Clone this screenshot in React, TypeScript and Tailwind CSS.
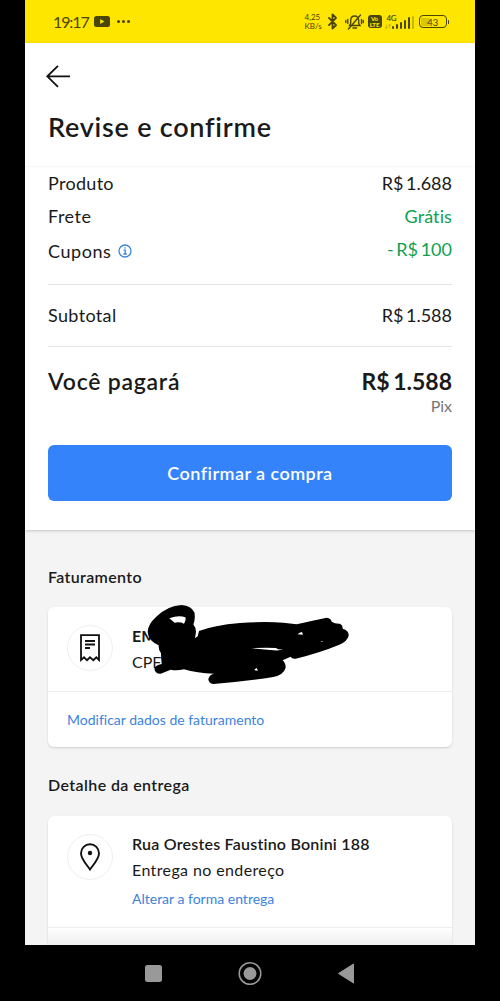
import React from 'react';
import { Bluetooth } from 'lucide-react';

const summary = [
  { label: 'Produto', value: 'R$ 1.688', color: 'text-[#1a1a1a]', labelSpacing: 'tracking-[0.3px]', valueSpacing: '[word-spacing:-2px]' },
  { label: 'Frete', value: 'Grátis', color: 'text-[#0fa150]', labelSpacing: 'tracking-[0.5px]', valueSpacing: 'tracking-[0.1px]' },
];

const signalBars = [3, 5, 7, 9, 12];

const StatusBar = () => {
  return (
    <div className="flex h-[43px] shrink-0 items-center bg-[#ffe600] pl-7 pr-[26px] text-[#4a4508]">
      <span className="w-[34px] whitespace-nowrap text-[16px] leading-none tracking-[-1.1px]">19:17</span>
      <svg className="ml-[7px] h-[11px] w-4" viewBox="0 0 16 11">
        <rect width="16" height="11" rx="2.5" fill="#4a4508" />
        <path d="M6.2 3v5L10.4 5.500z" fill="#ffe600" />
      </svg>
      <div className="ml-[7px] flex gap-[2.5px]">
        <i className="h-[2.5px] w-[2.5px] rounded-full bg-[#4a4508]" />
        <i className="h-[2.5px] w-[2.5px] rounded-full bg-[#4a4508]" />
        <i className="h-[2.5px] w-[2.5px] rounded-full bg-[#4a4508]" />
      </div>

      <div className="ml-auto flex items-center">
        <div className="w-[19px] text-[8px] leading-[9px]">
          <div>4,25</div>
          <div className="whitespace-nowrap">KB/s</div>
        </div>
        <Bluetooth className="h-[19px] w-[17px]" strokeWidth={2.6} />
        <svg className="ml-[4px] h-[18px] w-[19px]" viewBox="0 0 19 18" fill="none" stroke="currentColor" strokeWidth="1.4" strokeLinecap="round">
          <path d="M4.500 12.500h10.500l-1.300-2V7.500C13.700 4.500 12 3 9.700 3S5.700 4.500 5.700 7.500v3zM8 15h3.500M3.500 16L15.500 2M2.800 6.500v4M.8 7.500v2M16.500 6.500v4M18.300 7.500v2" />
        </svg>
        <div className="ml-1 flex h-[13px] w-[14px] flex-col items-center justify-center rounded-[3px] bg-[#4a4508] text-[6px] font-black leading-[5.5px] text-[#ffe600]">
          <span>Vo</span>
          <span>LTE</span>
        </div>
        <div className="relative ml-[5px] flex h-[14px] w-[27px] items-end justify-end gap-[1.5px]">
          <span className="absolute -top-[1px] left-0 text-[8px] font-semibold leading-[8px] tracking-[-0.4px]">4G</span>
          <span className="absolute bottom-0 left-[-2px] text-[5px] leading-[6px] tracking-[-0.5px] opacity-60">↓↑</span>
          {signalBars.map((height) => (
            <i key={height} className="w-[2.5px] shrink-0 rounded-sm bg-[#4a4508]" style={{ height }} />
          ))}
          <i className="h-[13px] w-[2px] shrink-0 rounded-sm bg-[#4a4508]/30" />
        </div>
        <div className="ml-[5px] flex h-[13px] w-[28px] items-center rounded-[4px] border-[1.5px] border-[#4a4508] p-[1.5px] text-[10px] leading-none">
          <span className="h-full w-[9px] bg-[#4a4508]/20" />
          <span className="-ml-[3px] tracking-[-0.3px]">43</span>
        </div>
        <i className="ml-px h-1 w-[1.5px] rounded bg-[#4a4508]" />
      </div>
    </div>
  );
};

const InfoIcon = () => (
  <svg className="ml-[7px] h-[14px] w-[14px]" viewBox="0 0 14 14" fill="none" stroke="#3c83dc" strokeWidth="1.3">
    <circle cx="7" cy="7" r="6" />
    <path d="M5.600 6.200H7.200v3.600M5.400 10h3.400" />
    <circle cx="7" cy="4" r=".8" fill="#3c83dc" stroke="none" />
  </svg>
);

const Scribble = () => (
  <svg className="absolute left-[97px] top-[-6px] h-[86px] w-[205px]" viewBox="45 18 615 258">
    <path
      fillRule="evenodd"
      d="M53 110Q54 88 78 66Q112 32 155 30Q184 32 193 52Q197 70 190 88Q197 97 198 110L195 130L203 124L207 108Q250 91 330 84Q400 79 460 83L500 88Q550 76 590 68Q603 69 605 80Q615 87 630 86Q639 91 638 101Q657 107 656 122Q652 139 628 149Q570 173 497 191Q486 193 482 185L458 196Q467 204 467 218Q461 239 430 246Q350 259 250 267Q236 265 235 252Q238 239 252 236Q200 235 162 223Q140 228 122 224L92 236Q76 237 73 221Q76 210 95 207Q93 188 93 175Q85 165 86 151Q54 136 53 110ZM118 70L134 83Q150 80 162 86Q169 75 166 67Q146 60 118 70ZM362 160Q405 157 438 159Q444 165 462 163Q450 168 420 165ZM373 226Q376 220 380 219L384 227ZM503 118Q508 112 516 111L519 119ZM571 139L577 138L578 141Z"
      fill="#000"
    />
  </svg>
);

const App = () => {
  return (
    <div className="flex h-[1001px] w-[500px] flex-col bg-black font-['Lato','Liberation_Sans',sans-serif] text-[#1a1a1a] [font-variant-ligatures:none]">
      <div className="mx-[25px] flex h-[945px] flex-col overflow-hidden bg-[#f4f4f4]">
        <StatusBar />

        {/* Order summary */}
        <section className="h-[487px] shrink-0 bg-white shadow-[0_1px_3px_rgba(0,0,0,0.2)]">
          <header className="h-[124px] border-b border-[#f7f7f7] px-[21px] pt-[22px]">
            <svg className="h-6 w-6" viewBox="0 0 24 24" fill="none" stroke="#111" strokeWidth="1.8">
              <path d="M24 11.300H1M12 .8L1.300 11.300L12 21.800" />
            </svg>
            <h1 className="ml-[2px] mt-[22px] whitespace-nowrap text-[27px] font-semibold leading-8 tracking-[0.75px]">
              Revise e confirme
            </h1>
          </header>

          <div className="px-[23px] text-[18px]">
            {summary.map((row) => (
              <div key={row.label} className="flex h-[33px] items-center justify-between">
                <span className={row.labelSpacing}>{row.label}</span>
                <span className={`${row.color} ${row.valueSpacing}`}>{row.value}</span>
              </div>
            ))}
            <div className="flex h-[52px] justify-between border-b border-[#e4e4e4]">
              <span className="mt-1 flex h-7 items-center tracking-[0.55px]">
                Cupons
                <InfoIcon />
              </span>
              <span className="mt-[2px] h-7 leading-7 text-[#0fa150] [word-spacing:-2px]">- R$ 100</span>
            </div>
            <div className="flex h-[62px] items-center justify-between border-b border-[#e4e4e4]">
              <span className="tracking-[0.35px]">Subtotal</span>
              <span className="[word-spacing:-2px]">R$ 1.588</span>
            </div>
            <div className="flex h-[98px] justify-between pt-[18px]">
              <span className="text-[23px] font-semibold leading-8 tracking-[0.75px]">Você pagará</span>
              <div className="text-right">
                <div className="text-[23px] font-bold leading-8 [word-spacing:-2px]">R$ 1.588</div>
                <div className="text-[16px] leading-[18px] text-[#757575]">Pix</div>
              </div>
            </div>
            <button className="h-14 w-full rounded-md bg-[#3483fa] text-[18px] font-semibold tracking-[0.45px] text-white">
              Confirmar a compra
            </button>
          </div>
        </section>

        {/* Billing */}
        <section className="shrink-0 px-[23px] pt-[35px]">
          <h2 className="h-[42px] text-[16px] font-semibold leading-6 tracking-[0.35px]">Faturamento</h2>
          <div className="relative h-[140px] rounded-md bg-white shadow-[0_1px_2px_rgba(0,0,0,0.16)]">
            <div className="flex h-[85px] border-b border-[#eee] pl-[19px] pt-[18px]">
              <div className="flex h-[46px] w-[46px] items-center justify-center rounded-full border border-[#eee]">
                <svg className="h-7 w-5" viewBox="0 0 20 28" fill="none" stroke="#111" strokeWidth="1.8">
                  <path d="M1 1.200H19V26L16.300 23.300L13.300 26.200L10 23.300L7 26.200L4 23.300L1 26ZM5 7H15M5 10.500H15M5 14H10" />
                </svg>
              </div>
              <div className="ml-[19px] text-[16px] leading-[26px]">
                <div className="-mt-[2px] font-bold">EM</div>
                <div>CPF</div>
              </div>
            </div>
            <a className="block pl-[19px] text-[14px] leading-[55px] text-[#3c83dc]">Modificar dados de faturamento</a>
            <Scribble />
          </div>
        </section>

        {/* Delivery */}
        <section className="shrink-0 px-[23px] pt-[26px]">
          <h2 className="h-[43px] text-[16px] font-semibold leading-6 tracking-[0.4px]">Detalhe da entrega</h2>
          <div className="h-[160px] rounded-md bg-white shadow-[0_1px_2px_rgba(0,0,0,0.16)]">
            <div className="flex h-[112px] border-b border-[#eee] pl-[19px] pt-[17px]">
              <div className="mt-px flex h-[46px] w-[46px] items-center justify-center rounded-full border border-[#eee]">
                <svg className="h-7 w-5" viewBox="0 0 20 28" fill="none" stroke="#111" strokeWidth="1.9">
                  <path d="M10 26.500C7 22 1 16 1 10.200A9 9 0 0 1 19 10.200C19 16 13 22 10 26.500Z" />
                  <circle cx="10" cy="10" r="2.200" fill="#111" stroke="none" />
                </svg>
              </div>
              <div className="ml-[19px] text-[16px] leading-[26px]">
                <div className="-mt-[2px] font-semibold tracking-[0.22px]">Rua Orestes Faustino Bonini 188</div>
                <div className="tracking-[0.38px]">Entrega no endereço</div>
                <a className="block pt-[2px] text-[14px] leading-7 text-[#3c83dc]">Alterar a forma entrega</a>
              </div>
            </div>
            <div className="h-[18px] bg-linear-to-b from-white to-[#ececec]" />
          </div>
        </section>
      </div>

      {/* System navigation */}
      <nav className="h-[56px]">
        <svg className="h-full w-full" viewBox="0 0 500 56">
          <rect x="145" y="20" width="17" height="17" rx="2.500" fill="#999" />
          <circle cx="250" cy="28.500" r="10.800" fill="none" stroke="#999" strokeWidth="1.500" />
          <circle cx="250" cy="28.500" r="6.500" fill="#999" />
          <path d="M338.500 28.500L353.500 19V38Z" fill="#999" stroke="#999" strokeLinejoin="round" />
        </svg>
      </nav>
    </div>
  );
};

export default App;
